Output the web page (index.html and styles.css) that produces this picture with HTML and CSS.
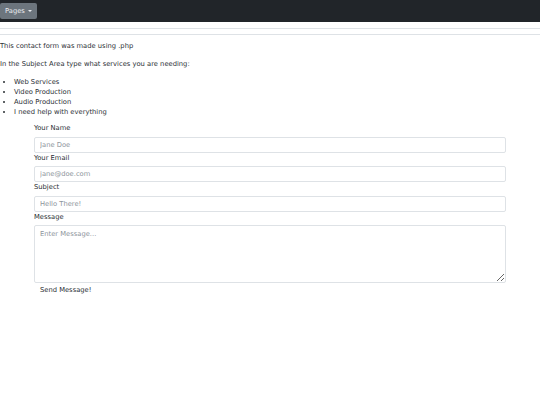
FILE: index.html
```html
<!DOCTYPE html>
<html lang="en">
<head>
<meta charset="utf-8">
<title>Contact</title>
<link rel="stylesheet" href="styles.css">
</head>
<body>
<nav class="navbar">
  <button class="pages-btn" type="button">Pages <span class="caret"></span></button>
</nav>
<div class="rules"></div>
<main class="content">
  <p class="intro">This contact form was made using .php</p>
  <p class="intro">In the Subject Area type what services you are needing:</p>
  <ul class="services">
    <li>Web Services</li>
    <li>Video Production</li>
    <li>Audio Production</li>
    <li>I need help with everything</li>
  </ul>
  <form class="contact-form">
    <label class="field-label" for="name">Your Name</label>
    <input class="field" id="name" type="text" placeholder="Jane Doe">
    <label class="field-label" for="email">Your Email</label>
    <input class="field" id="email" type="email" placeholder="jane@doe.com">
    <label class="field-label" for="subject">Subject</label>
    <input class="field" id="subject" type="text" placeholder="Hello There!">
    <label class="field-label" for="message">Message</label>
    <textarea class="field message" id="message" placeholder="Enter Message..."></textarea>
    <button class="send-btn" type="submit">Send Message!</button>
  </form>
</main>
</body>
</html>
```
FILE: styles.css
```css
html, body {
  margin: 0;
  padding: 0;
  background: #ffffff;
}
body {
  font-family: "DejaVu Sans", sans-serif;
  font-size: 6.75px;
  line-height: 10px;
  color: #2b3035;
}
.navbar {
  background: #212529;
  height: 22px;
  display: flex;
  align-items: center;
  padding: 0;
  box-sizing: border-box;
}
.pages-btn {
  font-family: inherit;
  font-size: 6.75px;
  line-height: 10px;
  color: #e9ecef;
  background: #6c757d;
  border: none;
  border-radius: 2px;
  height: 16px;
  padding: 0 5px;
  margin: 0;
  display: flex;
  align-items: center;
  gap: 3px;
}
.caret {
  display: inline-block;
  width: 0;
  height: 0;
  border-left: 2px solid transparent;
  border-right: 2px solid transparent;
  border-top: 2px solid #e9ecef;
}
.rules {
  margin-top: 6px;
  height: 5px;
  border-top: 1px solid #dee2e6;
  border-bottom: 1px solid #dee2e6;
}
.content {
  padding-top: 6px;
}
.intro {
  margin: 0 0 8px;
}
.services {
  margin: 0 0 6px;
  padding-left: 14px;
}
.contact-form {
  display: flex;
  flex-direction: column;
  align-items: stretch;
  margin: 0 34px;
}
.field-label {
  display: block;
  line-height: 10px;
  margin-bottom: 3.5px;
}
.field {
  font-family: inherit;
  font-size: 6.75px;
  height: 16px;
  box-sizing: border-box;
  border: 1px solid #dee2e6;
  border-radius: 2px;
  padding: 0 5px;
  margin: 0;
  color: #212529;
  background: #fff;
}
.field::placeholder {
  color: #8e959c;
}
.message {
  height: 58px;
  padding: 4px 5px;
  resize: vertical;
}
.send-btn {
  align-self: flex-start;
  font-family: inherit;
  font-size: 6.75px;
  line-height: 10px;
  color: #2b3035;
  background: none;
  border: none;
  padding: 2px 6px;
  margin: 0;
}
```
